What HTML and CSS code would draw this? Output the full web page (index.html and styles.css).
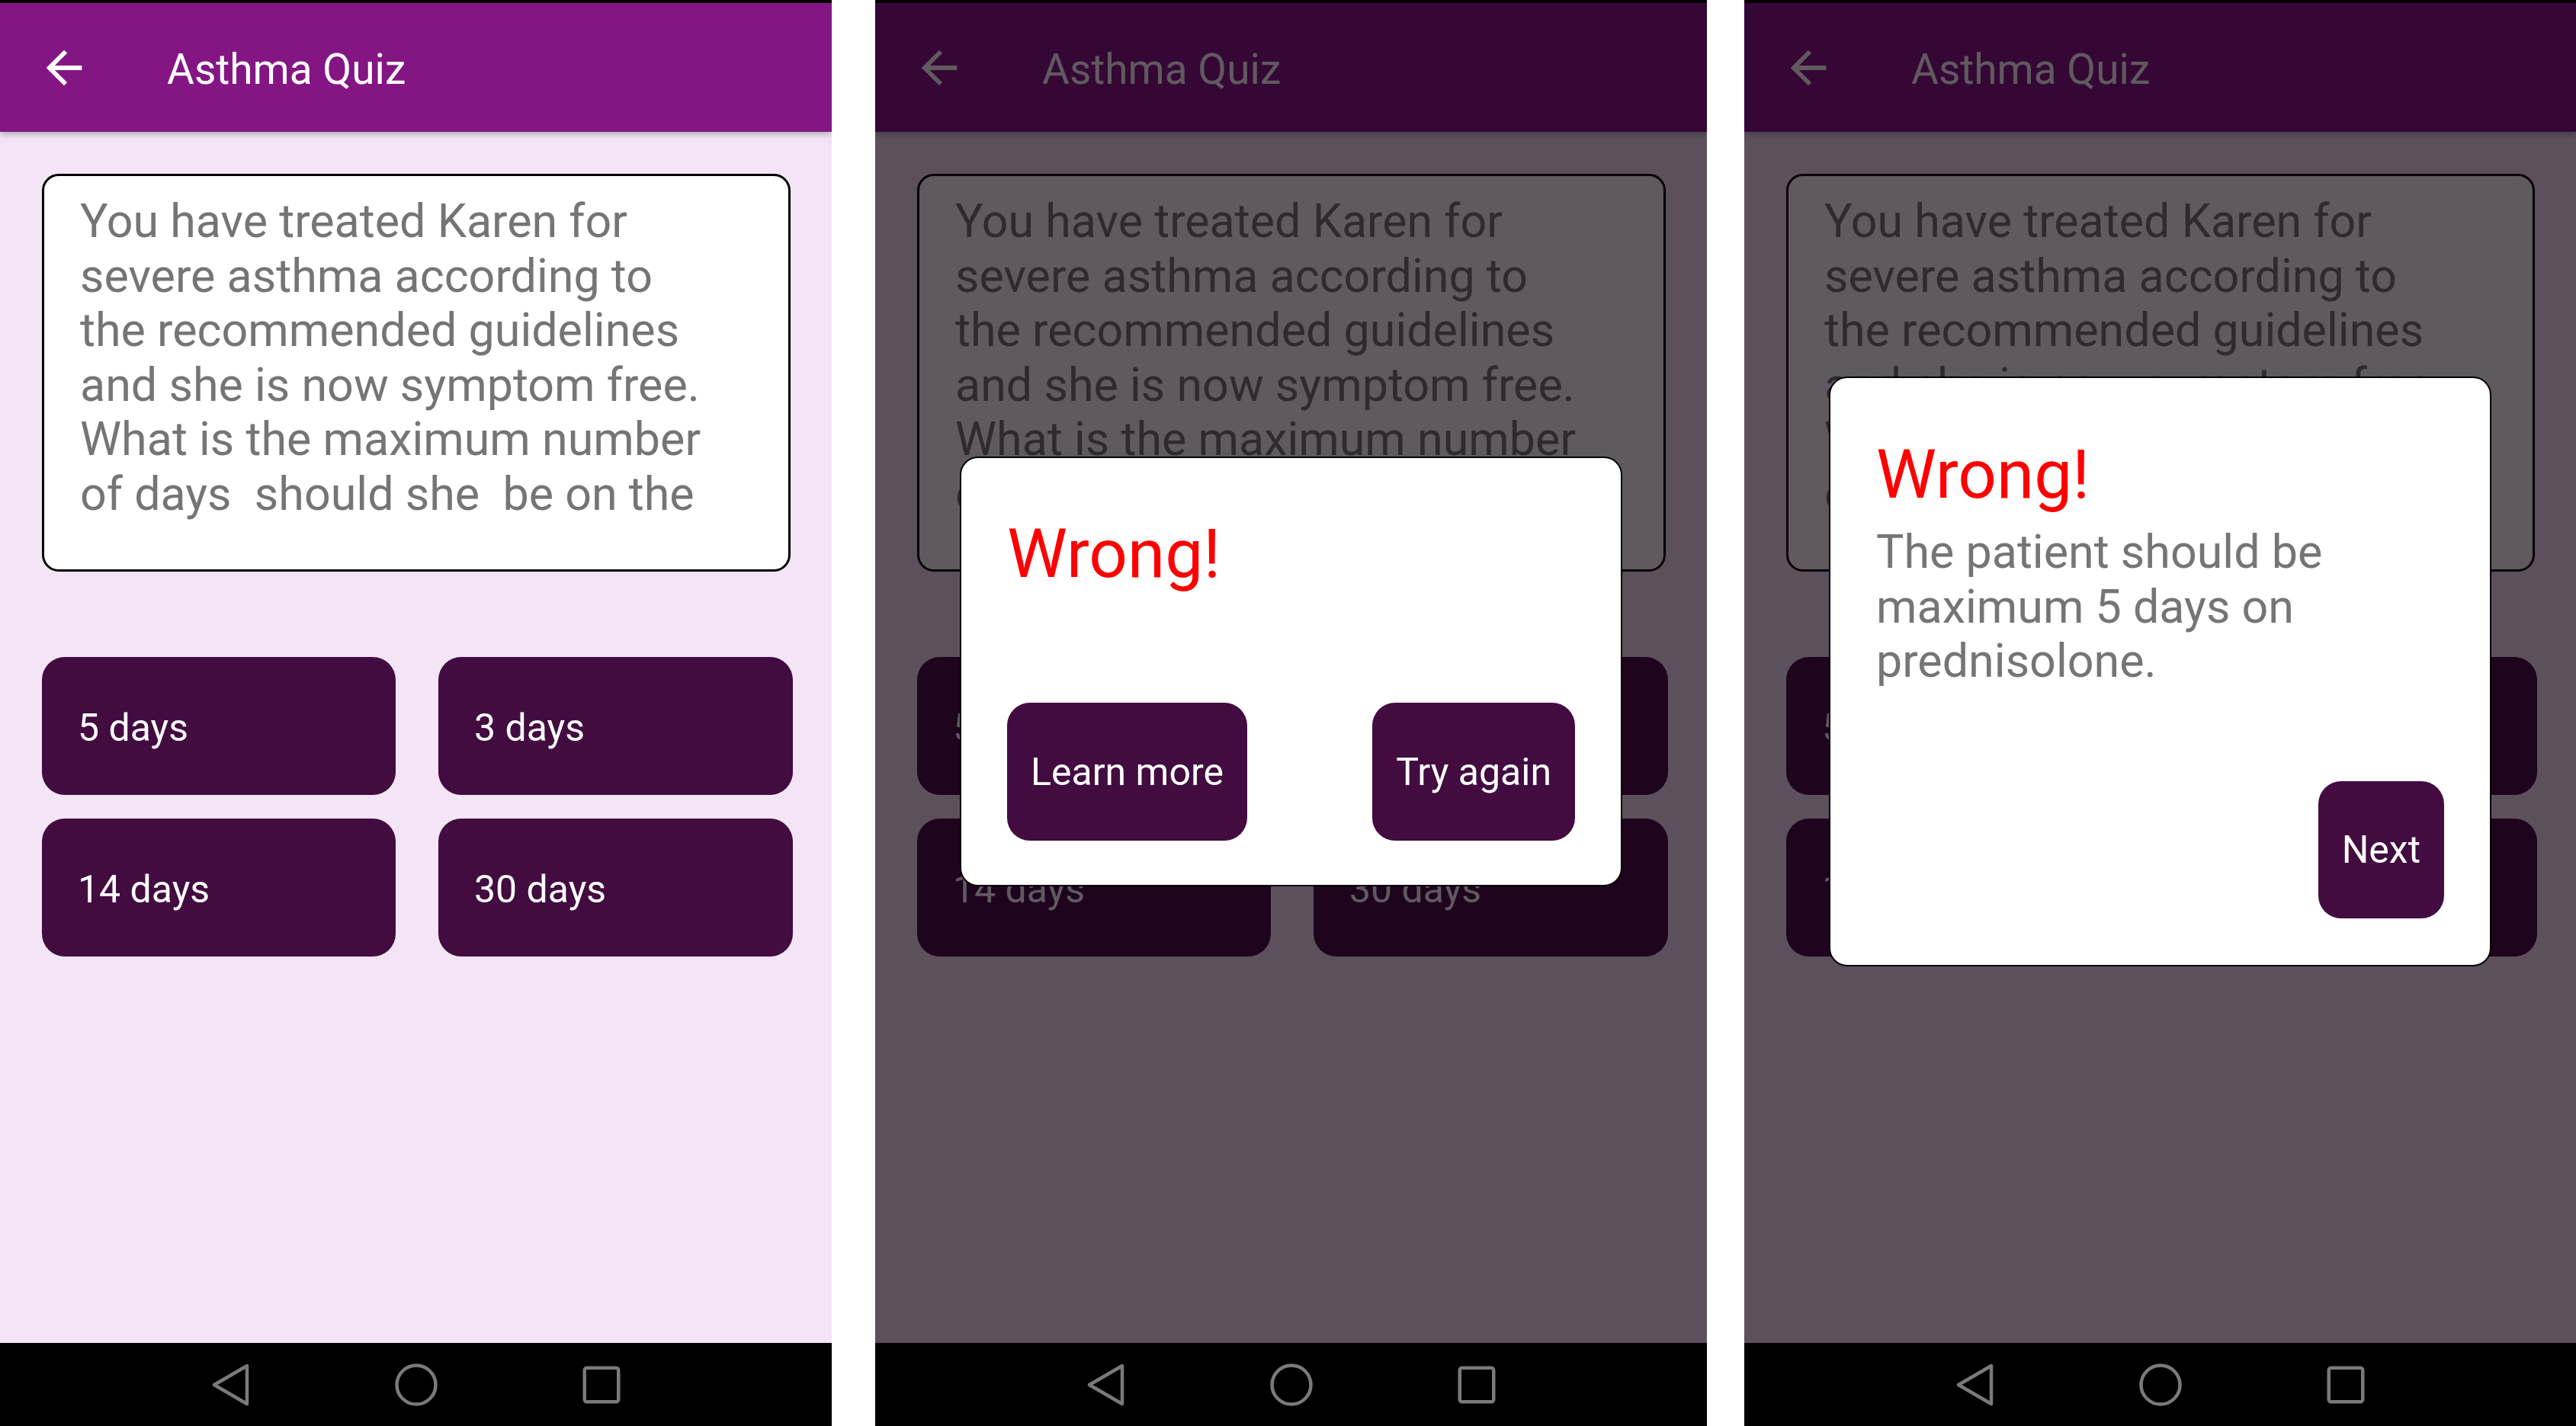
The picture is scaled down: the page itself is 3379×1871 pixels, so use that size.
FILE: index.html
```html
<!DOCTYPE html>
<html lang="en">
<head>
<meta charset="utf-8">
<title>Asthma Quiz</title>
<link rel="stylesheet" href="styles.css">
</head>
<body>
<div class="stage">

  <!-- Panel 1: question -->
  <section class="phone">
    <div class="screen">
      <div class="status"></div>
      <header class="appbar">
        <svg class="back" viewBox="0 0 24 24"><path d="M20 11H7.83l5.59-5.59L12 4l-8 8 8 8 1.41-1.41L7.83 13H20v-2z"/></svg>
        <h1 class="title">Asthma Quiz</h1>
      </header>
      <main class="content">
        <div class="question">
          <span class="line">You have treated Karen for</span>
          <span class="line">severe asthma according to</span>
          <span class="line">the recommended guidelines</span>
          <span class="line">and she is now symptom free.</span>
          <span class="line">What is the maximum number</span>
          <span class="line">of days  should she  be on the</span>
        </div>
        <div class="answers">
          <div class="btn answer">5 days</div>
          <div class="btn answer">3 days</div>
          <div class="btn answer">14 days</div>
          <div class="btn answer">30 days</div>
        </div>
      </main>
    </div>
    <nav class="navbar">
      <svg class="nav-icon" viewBox="0 0 60 60"><path d="M8 30 L51 5 L51 55 Z"/></svg>
      <svg class="nav-icon" viewBox="0 0 60 60"><circle cx="30" cy="30" r="25.5"/></svg>
      <svg class="nav-icon" viewBox="0 0 60 60"><rect x="7.75" y="7.75" width="44.5" height="44.5" rx="3"/></svg>
    </nav>
  </section>

  <!-- Panel 2: wrong dialog -->
  <section class="phone gap1">
    <div class="screen">
      <div class="status"></div>
      <header class="appbar">
        <svg class="back" viewBox="0 0 24 24"><path d="M20 11H7.83l5.59-5.59L12 4l-8 8 8 8 1.41-1.41L7.83 13H20v-2z"/></svg>
        <h1 class="title">Asthma Quiz</h1>
      </header>
      <main class="content">
        <div class="question">
          <span class="line">You have treated Karen for</span>
          <span class="line">severe asthma according to</span>
          <span class="line">the recommended guidelines</span>
          <span class="line">and she is now symptom free.</span>
          <span class="line">What is the maximum number</span>
          <span class="line">of days  should she  be on the</span>
        </div>
        <div class="answers">
          <div class="btn answer">5 days</div>
          <div class="btn answer">3 days</div>
          <div class="btn answer">14 days</div>
          <div class="btn answer">30 days</div>
        </div>
      </main>
      <div class="scrim">
        <div class="dialog dialog-choice">
          <div class="wrong">Wrong!</div>
          <div class="dialog-actions split">
            <div class="btn action">Learn more</div>
            <div class="btn action">Try again</div>
          </div>
        </div>
      </div>
    </div>
    <nav class="navbar">
      <svg class="nav-icon" viewBox="0 0 60 60"><path d="M8 30 L51 5 L51 55 Z"/></svg>
      <svg class="nav-icon" viewBox="0 0 60 60"><circle cx="30" cy="30" r="25.5"/></svg>
      <svg class="nav-icon" viewBox="0 0 60 60"><rect x="7.75" y="7.75" width="44.5" height="44.5" rx="3"/></svg>
    </nav>
  </section>

  <!-- Panel 3: explanation dialog -->
  <section class="phone gap2">
    <div class="screen">
      <div class="status"></div>
      <header class="appbar">
        <svg class="back" viewBox="0 0 24 24"><path d="M20 11H7.83l5.59-5.59L12 4l-8 8 8 8 1.41-1.41L7.83 13H20v-2z"/></svg>
        <h1 class="title">Asthma Quiz</h1>
      </header>
      <main class="content">
        <div class="question">
          <span class="line">You have treated Karen for</span>
          <span class="line">severe asthma according to</span>
          <span class="line">the recommended guidelines</span>
          <span class="line">and she is now symptom free.</span>
          <span class="line">What is the maximum number</span>
          <span class="line">of days  should she  be on the</span>
        </div>
        <div class="answers">
          <div class="btn answer">5 days</div>
          <div class="btn answer">3 days</div>
          <div class="btn answer">14 days</div>
          <div class="btn answer">30 days</div>
        </div>
      </main>
      <div class="scrim">
        <div class="dialog dialog-info">
          <div class="wrong">Wrong!</div>
          <p class="message">The patient should be maximum 5 days on prednisolone.</p>
          <div class="dialog-actions end">
            <div class="btn action">Next</div>
          </div>
        </div>
      </div>
    </div>
    <nav class="navbar">
      <svg class="nav-icon" viewBox="0 0 60 60"><path d="M8 30 L51 5 L51 55 Z"/></svg>
      <svg class="nav-icon" viewBox="0 0 60 60"><circle cx="30" cy="30" r="25.5"/></svg>
      <svg class="nav-icon" viewBox="0 0 60 60"><rect x="7.75" y="7.75" width="44.5" height="44.5" rx="3"/></svg>
    </nav>
  </section>

</div>
</body>
</html>
```

FILE: styles.css
```css
* {
  box-sizing: border-box;
}

html, body {
  margin: 0;
  padding: 0;
  background: #ffffff;
  overflow: hidden;
}

body {
  font-family: Roboto, "Noto Sans", "Liberation Sans", sans-serif;
}

.stage {
  display: flex;
  width: 3379px;
  height: 1871px;
  background: #ffffff;
}

.phone {
  width: 1091px;
  height: 1871px;
  display: flex;
  flex-direction: column;
  flex: none;
}

.gap1 {
  margin-left: 57px;
}

.gap2 {
  margin-left: 49px;
}

.screen {
  position: relative;
  height: 1762px;
  display: flex;
  flex-direction: column;
  background: #f3e5f5;
  overflow: hidden;
}

.status {
  height: 4px;
  background: #000000;
  flex: none;
}

.appbar {
  position: relative;
  z-index: 1;
  height: 169px;
  flex: none;
  display: flex;
  align-items: center;
  padding-left: 49px;
  background: #841684;
  box-shadow: 0 3px 8px rgba(0, 0, 0, 0.28);
}

.back {
  width: 70px;
  height: 70px;
  fill: #ffffff;
  flex: none;
}

.title {
  margin: 0 0 0 100px;
  padding-top: 5px;
  font-size: 55px;
  font-weight: 400;
  color: #ffffff;
  line-height: 64px;
}

.content {
  flex: 1;
  padding: 55px 51px 0 55px;
}

.question {
  height: 522px;
  margin-right: 3px;
  border: 3px solid #000000;
  border-radius: 22px;
  background: #ffffff;
  padding: 24px 20px 0 47px;
  overflow: hidden;
  color: #757575;
  font-size: 61px;
  line-height: 71.5px;
}

.line {
  display: block;
  white-space: pre;
}

.answers {
  margin-top: 112px;
  display: grid;
  grid-template-columns: 464px 465px;
  grid-auto-rows: 181px;
  column-gap: 56px;
  row-gap: 31px;
}

.btn {
  background: #420c41;
  color: #ffffff;
  font-size: 50px;
  border-radius: 30px;
  display: flex;
  align-items: center;
  white-space: nowrap;
}

.answer {
  padding-left: 47px;
  padding-top: 4px;
}

.navbar {
  height: 109px;
  flex: none;
  background: #000000;
  display: flex;
  align-items: center;
  justify-content: center;
  gap: 183px;
}

.nav-icon {
  width: 60px;
  height: 60px;
  fill: none;
  stroke: #7a7a7a;
  stroke-width: 4.5;
  stroke-linejoin: round;
}

/* Dialog overlay */
.scrim {
  position: absolute;
  top: 0;
  left: 0;
  right: 0;
  bottom: 0;
  z-index: 2;
  background: rgba(10, 0, 10, 0.65);
  display: flex;
  align-items: center;
  justify-content: center;
}

.dialog {
  width: 869px;
  background: #ffffff;
  border: 2px solid #000000;
  border-radius: 24px;
  padding-left: 60px;
  padding-right: 60px;
}

.dialog-choice {
  padding-top: 74px;
  padding-bottom: 58px;
}

.dialog-info {
  padding-top: 75px;
  padding-bottom: 61px;
}

.wrong {
  color: #ff0000;
  font-size: 89px;
  line-height: 104px;
}

.message {
  margin: 14px 0 0 0;
  color: #757575;
  font-size: 61px;
  line-height: 71.5px;
}

.dialog-actions {
  display: flex;
}

.dialog-choice .dialog-actions {
  margin-top: 143px;
}

.dialog-info .dialog-actions {
  margin-top: 121px;
}

.split {
  justify-content: space-between;
}

.end {
  justify-content: flex-end;
}

.action {
  height: 181px;
  padding: 0 31px;
  justify-content: center;
}

.dialog-info .action {
  height: 180px;
}
```
